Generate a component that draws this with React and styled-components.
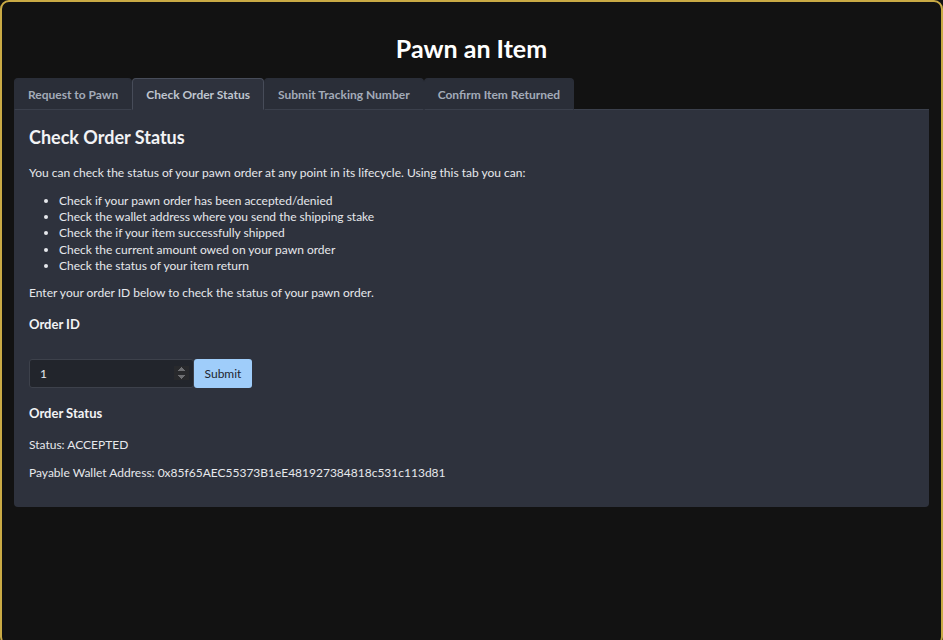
import { useState } from "react";
import styled, { createGlobalStyle } from "styled-components";

const GlobalStyle = createGlobalStyle`
  * { box-sizing: border-box; }
  body {
    margin: 0;
    background: #121212;
    font-family: "Segoe UI", Lato, "Noto Sans", sans-serif;
    color: #e6e8ec;
    overflow: hidden;
  }
`;

const tabs = [
  "Request to Pawn",
  "Check Order Status",
  "Submit Tracking Number",
  "Confirm Item Returned",
];

const checks = [
  "Check if your pawn order has been accepted/denied",
  "Check the wallet address where you send the shipping stake",
  "Check the if your item successfully shipped",
  "Check the current amount owed on your pawn order",
  "Check the status of your item return",
];

const App = () => {
  const [active, setActive] = useState(1);
  const [orderId, setOrderId] = useState("1");

  return (
    <>
      <GlobalStyle />
      <Frame>
        <Title>Pawn an Item</Title>
        <TabBar>
          {tabs.map((t, i) => (
            <Tab key={t} $active={i === active} onClick={() => setActive(i)}>
              {t}
            </Tab>
          ))}
        </TabBar>
        <Panel>
          <PanelTitle>Check Order Status</PanelTitle>
          <Text>
            You can check the status of your pawn order at any point in its
            lifecycle. Using this tab you can:
          </Text>
          <List>
            {checks.map((c) => (
              <li key={c}>{c}</li>
            ))}
          </List>
          <Text>Enter your order ID below to check the status of your pawn order.</Text>
          <SubHeading>Order ID</SubHeading>
          <Form onSubmit={(e) => e.preventDefault()}>
            <Input
              type="number"
              value={orderId}
              onChange={(e) => setOrderId(e.target.value)}
            />
            <SubmitButton type="submit">Submit</SubmitButton>
          </Form>
          <SubHeading $top={16}>Order Status</SubHeading>
          <Text $top={15}>Status: ACCEPTED</Text>
          <Text $top={12}>
            Payable Wallet Address: 0x85f65AEC55373B1eE481927384818c531c113d81
          </Text>
        </Panel>
      </Frame>
    </>
  );
};

export default App;

const Frame = styled.div`
  width: 943px;
  height: 646px;
  border: 2px solid #c9aa45;
  border-radius: 9px;
  padding: 33px 12px 0;
`;

const Title = styled.h1`
  margin: 0 0 17px;
  text-align: center;
  font-size: 25px;
  line-height: 26px;
  font-weight: 700;
  color: #ffffff;
`;

const TabBar = styled.div`
  display: flex;
  border-bottom: 1px solid #3b404c;
`;

const Tab = styled.button`
  height: 32px;
  margin-bottom: -1px;
  padding: 1px 13px 0;
  font-family: inherit;
  font-size: 12px;
  font-weight: 700;
  color: ${(p) => (p.$active ? "#bfc5cf" : "#a3abb8")};
  background: ${(p) => (p.$active ? "#2e323d" : "#2a2e38")};
  border: 1px solid ${(p) => (p.$active ? "#474c59" : "#2a2e38")};
  border-bottom-color: ${(p) => (p.$active ? "#2e323d" : "#3b404c")};
  border-radius: 4px 4px 0 0;
  cursor: pointer;
`;

const Panel = styled.div`
  background: #2e323d;
  padding: 15px 15px 26px;
  border-radius: 0 0 4px 4px;
`;

const PanelTitle = styled.h2`
  margin: 0;
  font-size: 18px;
  line-height: 24px;
  font-weight: 700;
  color: #f2f3f5;
`;

const Text = styled.p`
  margin: ${(p) => p.$top ?? 16}px 0 0;
  font-size: 12px;
  line-height: 16px;
`;

const List = styled.ul`
  margin: 12px 0 0;
  padding-left: 30px;
  font-size: 12px;
  line-height: 16.2px;
  & + p { margin-top: 11px; }
`;

const SubHeading = styled.h4`
  margin: ${(p) => p.$top ?? 14}px 0 0;
  font-size: 13px;
  line-height: 18px;
  font-weight: 700;
  color: #f2f3f5;
`;

const Form = styled.form`
  display: flex;
  margin-top: 26px;
`;

const Input = styled.input`
  width: 165px;
  height: 29px;
  padding: 0 4px 0 10px;
  background: #22252c;
  border: 1px solid #3d414b;
  border-radius: 3px;
  color: #e6e8ec;
  font-family: inherit;
  font-size: 12px;
  outline: none;
  color-scheme: dark;
  &::-webkit-inner-spin-button {
    opacity: 0.6;
  }
`;

const SubmitButton = styled.button`
  width: 58px;
  height: 29px;
  background: #9fcdfa;
  border: none;
  border-radius: 3px;
  color: #1e2530;
  font-family: inherit;
  font-size: 12px;
  cursor: pointer;
`;
